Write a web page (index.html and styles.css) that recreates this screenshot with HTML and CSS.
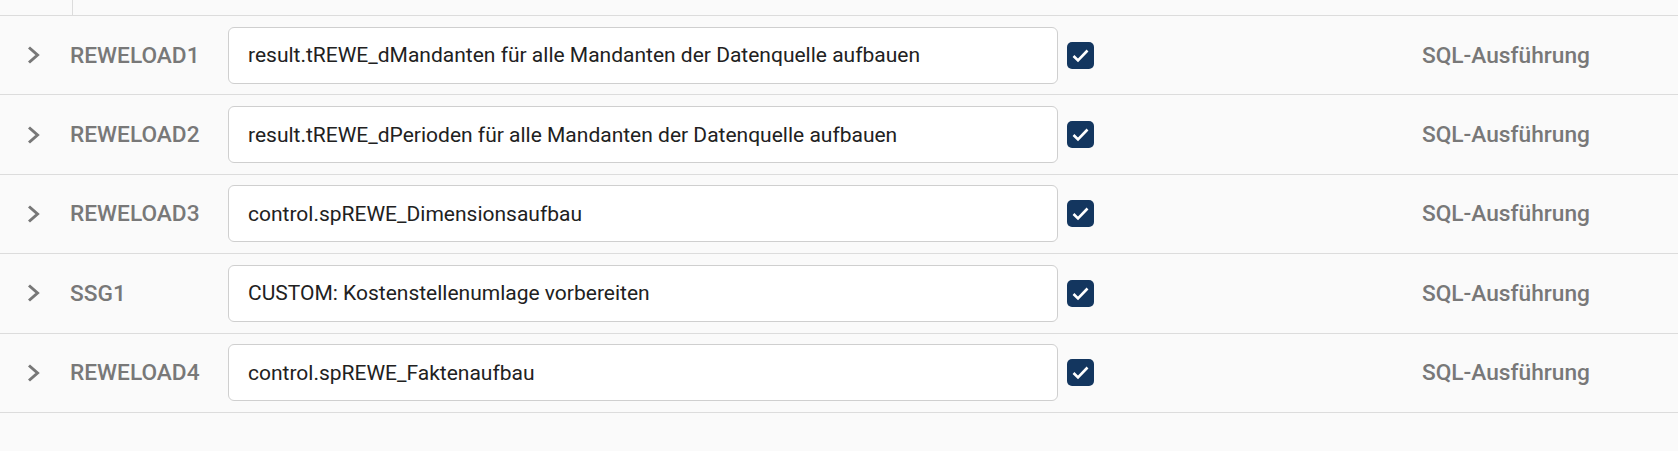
FILE: index.html
```html
<!DOCTYPE html>
<html lang="de">
<head>
    <meta charset="UTF-8">
    <meta name="viewport" content="width=device-width, initial-scale=1.0">
    <title>Ladeschritte</title>
    <link rel="stylesheet" href="styles.css">
</head>
<body>
    <div class="steps">
        <div class="head">
            <div class="head-cell"></div>
        </div>

        <div class="step">
            <span class="toggle"><svg viewBox="0 0 15 22" width="15" height="22"><path d="M3 3.5 L11.5 11 L3 18.5" /></svg></span>
            <span class="step-name">REWELOAD1</span>
            <input type="text" class="step-text" value="result.tREWE_dMandanten für alle Mandanten der Datenquelle aufbauen">
            <span class="check"><svg viewBox="0 0 27 27" width="27" height="27"><rect width="27" height="27" rx="5" /><path d="M6.5 14 L11 18.5 L20.5 8.5" /></svg></span>
            <span class="step-type">SQL-Ausführung</span>
        </div>

        <div class="step">
            <span class="toggle"><svg viewBox="0 0 15 22" width="15" height="22"><path d="M3 3.5 L11.5 11 L3 18.5" /></svg></span>
            <span class="step-name">REWELOAD2</span>
            <input type="text" class="step-text" value="result.tREWE_dPerioden für alle Mandanten der Datenquelle aufbauen">
            <span class="check"><svg viewBox="0 0 27 27" width="27" height="27"><rect width="27" height="27" rx="5" /><path d="M6.5 14 L11 18.5 L20.5 8.5" /></svg></span>
            <span class="step-type">SQL-Ausführung</span>
        </div>

        <div class="step">
            <span class="toggle"><svg viewBox="0 0 15 22" width="15" height="22"><path d="M3 3.5 L11.5 11 L3 18.5" /></svg></span>
            <span class="step-name">REWELOAD3</span>
            <input type="text" class="step-text" value="control.spREWE_Dimensionsaufbau">
            <span class="check"><svg viewBox="0 0 27 27" width="27" height="27"><rect width="27" height="27" rx="5" /><path d="M6.5 14 L11 18.5 L20.5 8.5" /></svg></span>
            <span class="step-type">SQL-Ausführung</span>
        </div>

        <div class="step">
            <span class="toggle"><svg viewBox="0 0 15 22" width="15" height="22"><path d="M3 3.5 L11.5 11 L3 18.5" /></svg></span>
            <span class="step-name">SSG1</span>
            <input type="text" class="step-text" value="CUSTOM: Kostenstellenumlage vorbereiten">
            <span class="check"><svg viewBox="0 0 27 27" width="27" height="27"><rect width="27" height="27" rx="5" /><path d="M6.5 14 L11 18.5 L20.5 8.5" /></svg></span>
            <span class="step-type">SQL-Ausführung</span>
        </div>

        <div class="step">
            <span class="toggle"><svg viewBox="0 0 15 22" width="15" height="22"><path d="M3 3.5 L11.5 11 L3 18.5" /></svg></span>
            <span class="step-name">REWELOAD4</span>
            <input type="text" class="step-text" value="control.spREWE_Faktenaufbau">
            <span class="check"><svg viewBox="0 0 27 27" width="27" height="27"><rect width="27" height="27" rx="5" /><path d="M6.5 14 L11 18.5 L20.5 8.5" /></svg></span>
            <span class="step-type">SQL-Ausführung</span>
        </div>
    </div>
</body>
</html>
```

FILE: styles.css
```css
body {
    margin: 0;
    background-color: #fafafa;
    font-family: Roboto, "Liberation Sans", sans-serif;
}
.head {
    height: 15px;
    border-bottom: 1px solid #dcdcdc;
}
.head-cell {
    width: 73px;
    height: 15px;
    border-right: 1px solid #dcdcdc;
    box-sizing: border-box;
}
.step {
    display: grid;
    grid-template-columns: 70px 158px 830px 1fr 256px;
    align-items: center;
    height: 79.4px;
    box-sizing: border-box;
    border-bottom: 1px solid #dcdcdc;
}
.toggle {
    display: flex;
    justify-content: center;
    padding-right: 3px;
}
.toggle svg {
    fill: none;
    stroke: #777;
    stroke-width: 3;
}
.step-name,
.step-type {
    font-size: 22.7px;
    font-weight: 500;
    color: #787878;
}
.step-text {
    height: 57px;
    box-sizing: border-box;
    padding: 0 19px;
    border: 1.5px solid #cfcfcf;
    border-radius: 6px;
    background-color: #fff;
    font-family: Roboto, "Liberation Sans", sans-serif;
    font-size: 21px;
    color: #212121;
    outline: none;
}
.check {
    display: flex;
    padding-left: 9px;
}
.check rect {
    fill: #13365f;
}
.check path {
    fill: none;
    stroke: #fff;
    stroke-width: 2.6;
}
```
